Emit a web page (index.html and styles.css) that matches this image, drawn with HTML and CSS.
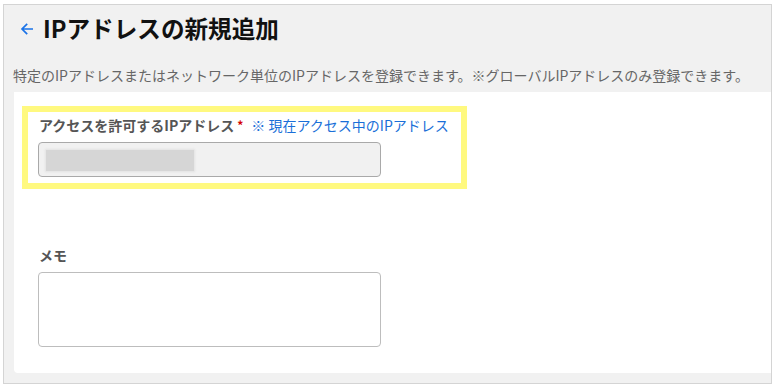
FILE: index.html
```html
<!DOCTYPE html>
<html lang="ja">
<head>
    <meta charset="UTF-8">
    <meta name="viewport" content="width=device-width, initial-scale=1.0">
    <title>IPアドレスの新規追加</title>
    <link rel="stylesheet" href="styles.css">
</head>
<body>
    <div class="frame">
        <div class="page-header">
            <a href="#" class="back-link">
                <svg width="14" height="14" viewBox="0 0 14 14"><path d="M13 7H2M7.2 1.8L2 7l5.2 5.2" fill="none" stroke="#1a73e8" stroke-width="1.7"/></svg>
            </a>
            <h1>IPアドレスの新規追加</h1>
        </div>
        <p class="description">特定のIPアドレスまたはネットワーク単位のIPアドレスを登録できます。※グローバルIPアドレスのみ登録できます。</p>
        <div class="form-card">
            <div class="highlight">
                <div class="field-label">アクセスを許可するIPアドレス<span class="required">*</span><a href="#" class="current-ip">※ 現在アクセス中のIPアドレス</a></div>
                <div class="ip-input"><span class="masked"></span></div>
            </div>
            <div class="memo-field">
                <div class="field-label">メモ</div>
                <textarea class="memo-input"></textarea>
            </div>
        </div>
    </div>
</body>
</html>
```

FILE: styles.css
```css
body {
    margin: 0;
    background: #fff;
    font-family: "Noto Sans CJK JP", "Noto Sans", sans-serif;
}
.frame {
    margin: 4px 3px 3px 3px;
    height: 380px;
    box-sizing: border-box;
    border: 1px solid #d4d4d4;
    background: #f1f1f1;
    padding: 0 0 10px 10px;
    display: flex;
    flex-direction: column;
}
.page-header {
    display: flex;
    align-items: center;
    height: 48px;
    padding: 0 0 0 6px;
}
.back-link {
    display: flex;
    margin-right: 9px;
}
h1 {
    margin: 0;
    font-size: 23.6px;
    font-weight: bold;
    color: #111;
    line-height: 1;
}
.description {
    margin: 12px 0 0 -1px;
    font-size: 14px;
    color: #666;
    line-height: 20px;
    height: 27px;
}
.form-card {
    flex: 1;
    background: #fff;
    border-radius: 0 0 0 4px;
    padding: 14px 0 0 8px;
}
.highlight {
    width: 423px;
    border: 6px solid #fff97f;
    padding: 3px 0 6px 10px;
}
.field-label {
    font-size: 14px;
    font-weight: bold;
    color: #555;
    line-height: 20px;
    padding-left: 1px;
    margin-bottom: 7px;
}
.required {
    color: #d40000;
    font-size: 12px;
    vertical-align: top;
    margin-left: 3px;
}
.current-ip {
    margin-left: 8px;
    color: #1a6fd8;
    font-weight: normal;
    text-decoration: none;
}
.ip-input {
    width: 343px;
    height: 35px;
    box-sizing: border-box;
    border: 1px solid #a9a9a9;
    border-radius: 4px;
    background: #f1f1f1;
    padding: 7px 0 0 7px;
}
.masked {
    display: block;
    width: 148px;
    height: 21px;
    background: #d6d6d6;
    box-shadow: 0 0 2px 1px #e2e2e2;
}
.memo-field {
    padding: 56px 0 0 16px;
}
.memo-input {
    display: block;
    width: 343px;
    height: 75px;
    box-sizing: border-box;
    border: 1px solid #bdbdbd;
    border-radius: 4px;
    resize: none;
    margin: 0;
}
```
